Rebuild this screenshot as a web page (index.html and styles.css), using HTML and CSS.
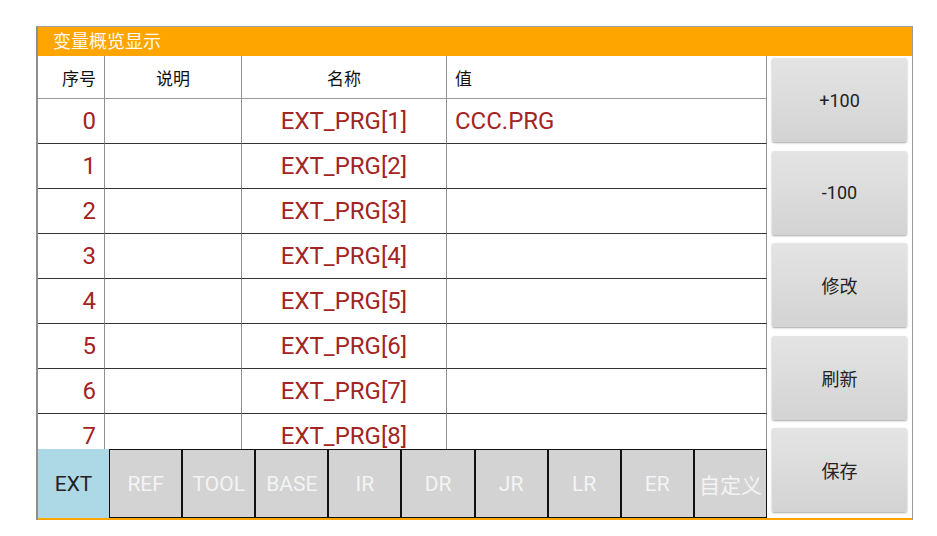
FILE: index.html
```html
<!DOCTYPE html>
<html lang="zh-CN">
<head>
    <meta charset="UTF-8">
    <title>变量概览显示</title>
    <link rel="stylesheet" href="styles.css">
</head>
<body>
    <div class="panel">
        <div class="title">变量概览显示</div>
        <div class="main">
            <div class="left">
                <div class="table-wrap">
                    <div class="grid">
                        <div class="th c-no">序号</div>
                        <div class="th c-desc">说明</div>
                        <div class="th c-name">名称</div>
                        <div class="th c-val">值</div>

                        <div class="td c-no">0</div><div class="td"></div><div class="td c-name">EXT_PRG[1]</div><div class="td c-val">CCC.PRG</div>
                        <div class="td c-no">1</div><div class="td"></div><div class="td c-name">EXT_PRG[2]</div><div class="td c-val"></div>
                        <div class="td c-no">2</div><div class="td"></div><div class="td c-name">EXT_PRG[3]</div><div class="td c-val"></div>
                        <div class="td c-no">3</div><div class="td"></div><div class="td c-name">EXT_PRG[4]</div><div class="td c-val"></div>
                        <div class="td c-no">4</div><div class="td"></div><div class="td c-name">EXT_PRG[5]</div><div class="td c-val"></div>
                        <div class="td c-no">5</div><div class="td"></div><div class="td c-name">EXT_PRG[6]</div><div class="td c-val"></div>
                        <div class="td c-no">6</div><div class="td"></div><div class="td c-name">EXT_PRG[7]</div><div class="td c-val"></div>
                        <div class="td c-no">7</div><div class="td"></div><div class="td c-name">EXT_PRG[8]</div><div class="td c-val"></div>
                    </div>
                </div>
                <div class="tabs">
                    <div class="tab active">EXT</div>
                    <div class="tab">REF</div>
                    <div class="tab">TOOL</div>
                    <div class="tab">BASE</div>
                    <div class="tab">IR</div>
                    <div class="tab">DR</div>
                    <div class="tab">JR</div>
                    <div class="tab">LR</div>
                    <div class="tab">ER</div>
                    <div class="tab">自定义</div>
                </div>
            </div>
            <div class="side">
                <button class="btn">+100</button>
                <button class="btn">-100</button>
                <button class="btn">修改</button>
                <button class="btn">刷新</button>
                <button class="btn">保存</button>
            </div>
        </div>
    </div>
</body>
</html>
```

FILE: styles.css
```css
body {
    margin: 0;
    background-color: #fff;
    font-family: Roboto, "Noto Sans CJK SC", sans-serif;
}
.panel {
    width: 874px;
    margin: 26px 0 0 36px;
    border-top: 1px solid #a0a0a0;
    border-left: 2px solid #8e8e8e;
    border-right: 1px solid #9a9a9a;
}
.title {
    height: 29px;
    line-height: 29px;
    padding-left: 15px;
    background-color: #ffa500;
    color: #fffaf0;
    font-size: 18px;
}
.main {
    display: flex;
    height: 462px;
    border-bottom: 2px solid #ffa500;
}
.left {
    width: 729px;
    display: flex;
    flex-direction: column;
}
.table-wrap {
    height: 393px;
    overflow: hidden;
}
.grid {
    display: grid;
    grid-template-columns: 67px 137px 205px 320px;
    grid-template-rows: 43px;
    grid-auto-rows: 45px;
}
.th, .td {
    box-sizing: border-box;
    border-right: 1px solid #8f8f8f;
    border-bottom: 1px solid #333;
    display: flex;
    align-items: center;
    justify-content: center;
    white-space: nowrap;
}
.th {
    border-bottom-color: #999;
    font-size: 17px;
    color: #111;
}
.td {
    font-size: 24px;
    color: #a32424;
}
.c-no {
    justify-content: flex-end;
    padding-right: 8px;
}
.c-val {
    justify-content: flex-start;
    padding-left: 8px;
}
.tabs {
    display: flex;
    height: 69px;
}
.tab {
    flex: 1;
    display: flex;
    align-items: center;
    justify-content: center;
    background-color: #d3d3d3;
    border: 1px solid #111;
    color: #f4f4f4;
    font-size: 21px;
    white-space: nowrap;
    overflow: hidden;
}
.tab.active {
    background-color: #add8e6;
    border: none;
    color: #222;
}
.side {
    width: 145px;
    box-sizing: border-box;
    padding: 2px 5px 6px;
    display: flex;
    flex-direction: column;
    justify-content: space-between;
}
.btn {
    height: 84px;
    border: none;
    border-radius: 2px;
    background: linear-gradient(#e4e4e4, #d3d3d3);
    box-shadow: 0 1px 2px rgba(0,0,0,0.35);
    font-family: Roboto, "Noto Sans CJK SC", sans-serif;
    font-size: 18px;
    color: #222;
}
```
